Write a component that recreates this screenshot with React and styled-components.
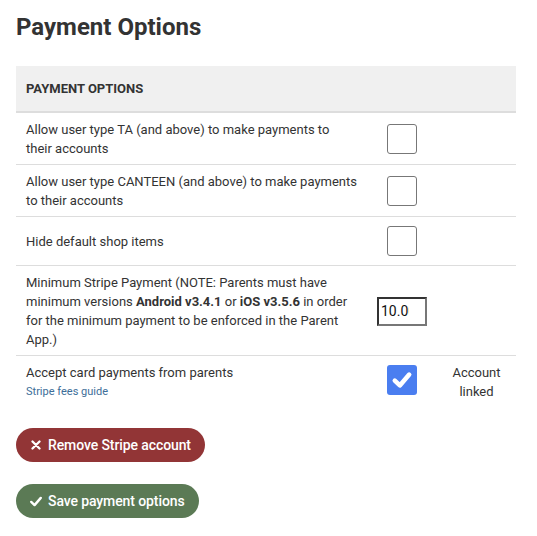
import React from 'react';
import styled, { createGlobalStyle } from 'styled-components';

const GlobalStyle = createGlobalStyle`
  body {
    margin: 0;
    background: #fff;
    font-family: Roboto, "Liberation Sans", Arial, sans-serif;
    color: #333;
  }
`;

const Page = styled.div`
  padding: 11px 16px 16px 16px;
  width: 500px;
`;

const Title = styled.h1`
  font-size: 24px;
  font-weight: 700;
  margin: 0 0 23px 0;
  line-height: 32px;
  color: #333;
`;

const Table = styled.table`
  width: 100%;
  border-collapse: collapse;
  font-size: 13px;
  line-height: 19px;
  color: #333;
`;

const HeadCell = styled.th`
  background: #f0f0f0;
  text-align: left;
  font-size: 13px;
  font-weight: 700;
  text-transform: uppercase;
  height: 45px;
  padding: 0 10px;
  border-bottom: 2px solid #ddd;
`;

const Row = styled.tr`
  border-bottom: ${p => (p.last ? 'none' : '1px solid #ddd')};
`;

const LabelCell = styled.td`
  padding: 7px 10px 6px 10px;
  width: 331px;
  vertical-align: ${p => (p.top ? 'top' : 'middle')};
`;

const ControlCell = styled.td`
  padding: 7px 10px 6px 10px;
  width: 50px;
  text-align: center;
  vertical-align: ${p => (p.top ? 'top' : 'middle')};
`;

const NoteCell = styled.td`
  padding: 7px 10px 6px 10px;
  text-align: center;
  vertical-align: top;
`;

const Box = styled.span`
  display: inline-block;
  width: 30px;
  height: 30px;
  box-sizing: border-box;
  margin: 2px 0 3px 0;
  border-radius: 3px;
  border: ${p => (p.checked ? 'none' : '1px solid #777')};
  background: ${p => (p.checked ? '#4a7ef0' : '#fff')};
  vertical-align: middle;
  position: relative;
`;

const AmountInput = styled.input`
  width: 50px;
  height: 29px;
  box-sizing: border-box;
  border: 2px solid #333;
  border-right-color: #777;
  border-bottom-color: #777;
  padding: 0 16px 0 2px;
  font-family: inherit;
  font-size: 14px;
  color: #111;
  vertical-align: middle;
`;

const Link = styled.a`
  display: block;
  color: #3d6e99;
  font-size: 11px;
  line-height: 20px;
  text-decoration: none;
`;

const Actions = styled.div`
  display: flex;
  flex-direction: column;
  align-items: flex-start;
  gap: 22px;
  margin-top: 20px;
`;

const Pill = styled.button`
  display: inline-flex;
  align-items: center;
  gap: 4px;
  height: 34px;
  padding: 0 14px 0 12px;
  border: none;
  border-radius: 17px;
  background: ${p => (p.tone === 'danger' ? '#923536' : '#5b7a55')};
  color: #fff;
  font-family: inherit;
  font-size: 14px;
  font-weight: 500;
  letter-spacing: -0.1px;
  cursor: pointer;
`;

const IconSlot = styled.span`
  display: inline-flex;
  align-items: center;
  justify-content: center;
  width: 16px;
  height: 16px;
`;

const CheckMark = styled.span`
  position: absolute;
  inset: 0;
  display: flex;
  align-items: center;
  justify-content: center;
`;

const Check = ({ size = 20, width = 3.2 }) => (
  <svg width={size} height={size} viewBox="0 0 20 20" fill="none">
    <path d="M4 10.5 L8.2 14.5 L16 5.5" stroke="#fff" strokeWidth={width} strokeLinecap="round" strokeLinejoin="round" />
  </svg>
);

const Cross = () => (
  <svg width="10" height="10" viewBox="0 0 10 10" fill="none">
    <path d="M1.5 1.5 L8.5 8.5 M8.5 1.5 L1.5 8.5" stroke="#fff" strokeWidth="2.3" strokeLinecap="round" />
  </svg>
);

export default function App() {
  return (
    <Page>
      <GlobalStyle />
      <Title>Payment Options</Title>
      <Table>
        <thead>
          <tr>
            <HeadCell colSpan={3}>Payment Options</HeadCell>
          </tr>
        </thead>
        <tbody>
          <Row>
            <LabelCell>Allow user type TA (and above) to make payments to their accounts</LabelCell>
            <ControlCell><Box /></ControlCell>
            <NoteCell />
          </Row>
          <Row>
            <LabelCell>Allow user type CANTEEN (and above) to make payments to their accounts</LabelCell>
            <ControlCell><Box /></ControlCell>
            <NoteCell />
          </Row>
          <Row>
            <LabelCell>Hide default shop items</LabelCell>
            <ControlCell><Box /></ControlCell>
            <NoteCell />
          </Row>
          <Row>
            <LabelCell>
              Minimum Stripe Payment (NOTE: Parents must have minimum versions <b>Android v3.4.1</b> or <b>iOS v3.5.6</b> in order for the minimum payment to be enforced in the Parent App.)
            </LabelCell>
            <ControlCell><AmountInput defaultValue="10.00" /></ControlCell>
            <NoteCell />
          </Row>
          <Row last>
            <LabelCell top>
              Accept card payments from parents
              <Link href="#">Stripe fees guide</Link>
            </LabelCell>
            <ControlCell top>
              <Box checked>
                <CheckMark><Check size={24} width={3.8} /></CheckMark>
              </Box>
            </ControlCell>
            <NoteCell>Account linked</NoteCell>
          </Row>
        </tbody>
      </Table>
      <Actions>
        <Pill tone="danger"><IconSlot><Cross /></IconSlot>Remove Stripe account</Pill>
        <Pill tone="success"><IconSlot><Check size={17} width={3} /></IconSlot>Save payment options</Pill>
      </Actions>
    </Page>
  );
}
